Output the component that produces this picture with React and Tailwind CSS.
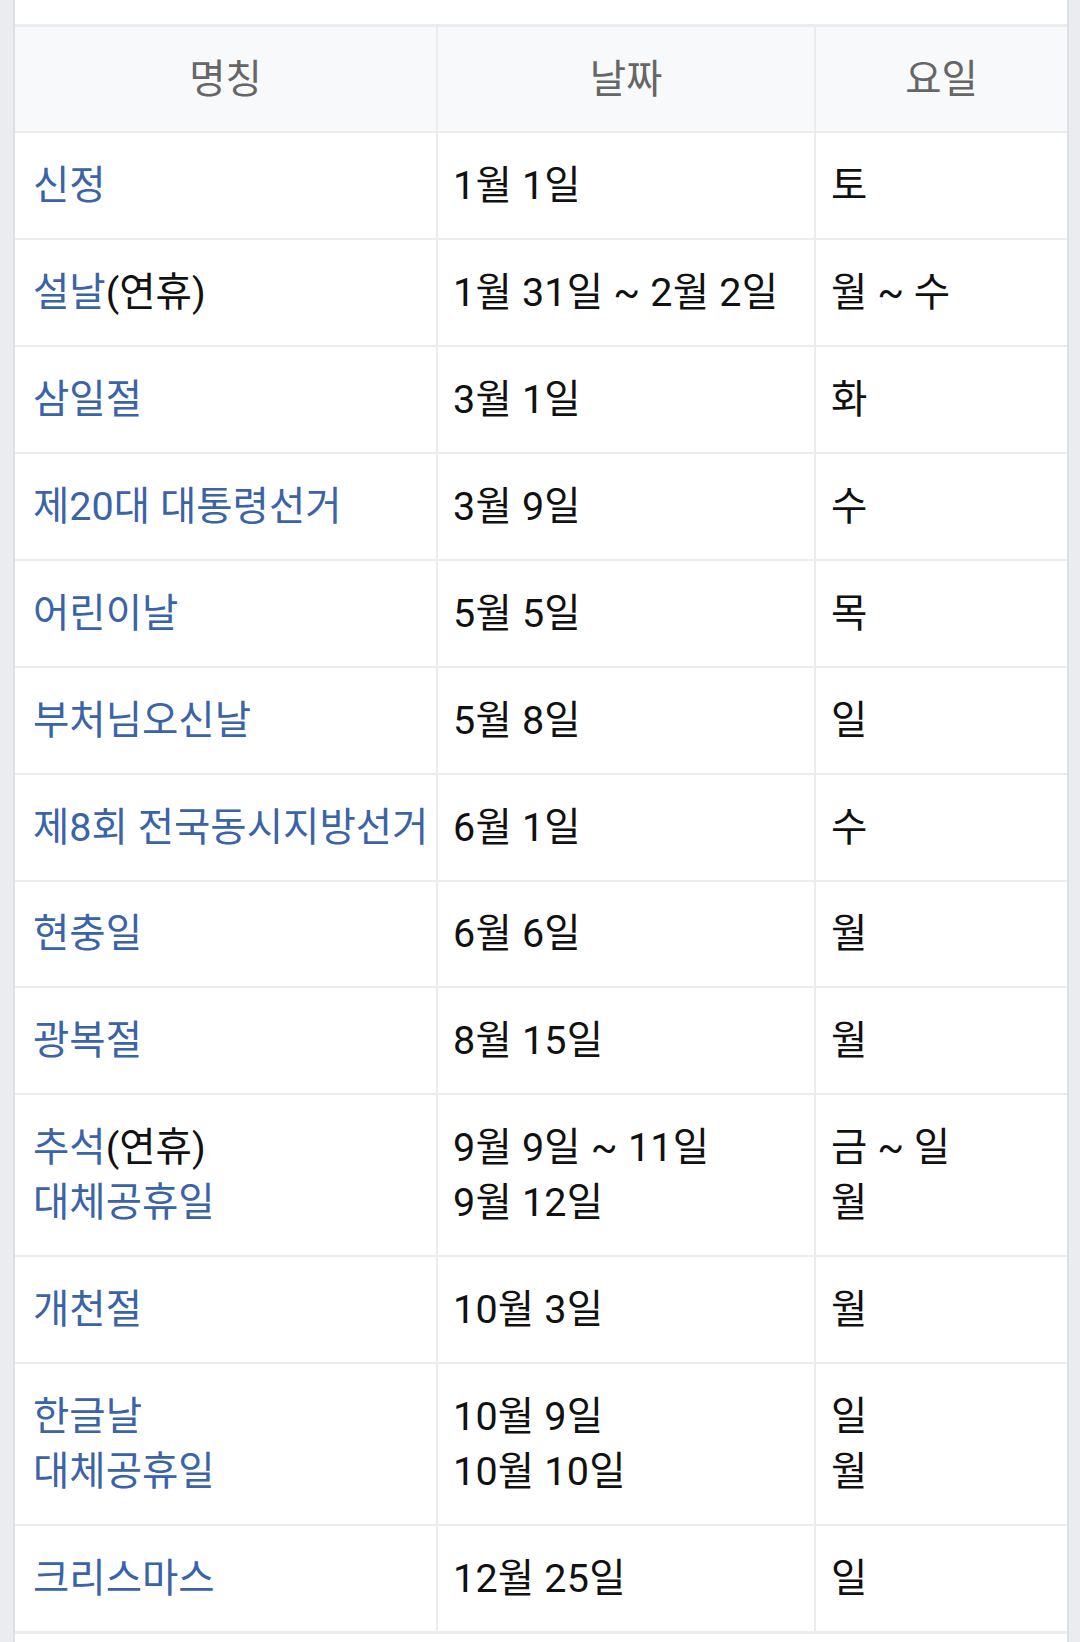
import React from "react";

const L = ({ children }) => <span className="text-[#3a63a8]">{children}</span>;

const rows = [
  [[<L key="a">신정</L>], ["1월 1일"], ["토"]],
  [[<span key="a"><L>설날</L>(연휴)</span>], ["1월 31일 ~ 2월 2일"], ["월 ~ 수"]],
  [[<L key="a">삼일절</L>], ["3월 1일"], ["화"]],
  [[<L key="a">제20대 대통령선거</L>], ["3월 9일"], ["수"]],
  [[<L key="a">어린이날</L>], ["5월 5일"], ["목"]],
  [[<L key="a">부처님오신날</L>], ["5월 8일"], ["일"]],
  [[<L key="a">제8회 전국동시지방선거</L>], ["6월 1일"], ["수"]],
  [[<L key="a">현충일</L>], ["6월 6일"], ["월"]],
  [[<L key="a">광복절</L>], ["8월 15일"], ["월"]],
  [
    [<span key="a"><L>추석</L>(연휴)</span>, <L key="b">대체공휴일</L>],
    ["9월 9일 ~ 11일", "9월 12일"],
    ["금 ~ 일", "월"],
  ],
  [[<L key="a">개천절</L>], ["10월 3일"], ["월"]],
  [
    [<L key="a">한글날</L>, <L key="b">대체공휴일</L>],
    ["10월 9일", "10월 10일"],
    ["일", "월"],
  ],
  [[<L key="a">크리스마스</L>], ["12월 25일"], ["일"]],
];

const pad = ["pl-[18px] pr-[4px]", "px-[15px] tracking-[0.2px]", "px-[15px]"];

export default function App() {
  return (
    <div
      className="flex w-[1080px] h-[1642px] bg-white overflow-hidden"
      style={{ fontFamily: 'Roboto, "Noto Sans CJK KR", sans-serif' }}
    >
      <div className="w-[13px] shrink-0 bg-[#eaecf0] border-r-2 border-[#dcdfe4] box-content" />
      <div className="flex-1 pt-[24px]">
        <div className="grid grid-cols-[421px_376px_1fr] gap-[2px] bg-[#eaecf0] border-y-[3px] border-[#eaecf0] text-[39.5px] leading-[55px] text-[#111]">
          {["명칭", "날짜", "요일"].map((h) => (
            <div key={h} className="bg-[#f8f9fa] text-[#666] text-center py-[24.7px]">
              {h}
            </div>
          ))}
          {rows.map((r, i) =>
            r.map((cell, j) => (
              <div key={i + "-" + j} className={"bg-white py-[24.95px] whitespace-nowrap " + pad[j]}>
                {cell.map((line, k) => (
                  <div key={k}>{line}</div>
                ))}
              </div>
            ))
          )}
        </div>
      </div>
      <div className="w-[11px] shrink-0 bg-[#eaecf0] border-l-2 border-[#dcdfe4] box-content" />
    </div>
  );
}
